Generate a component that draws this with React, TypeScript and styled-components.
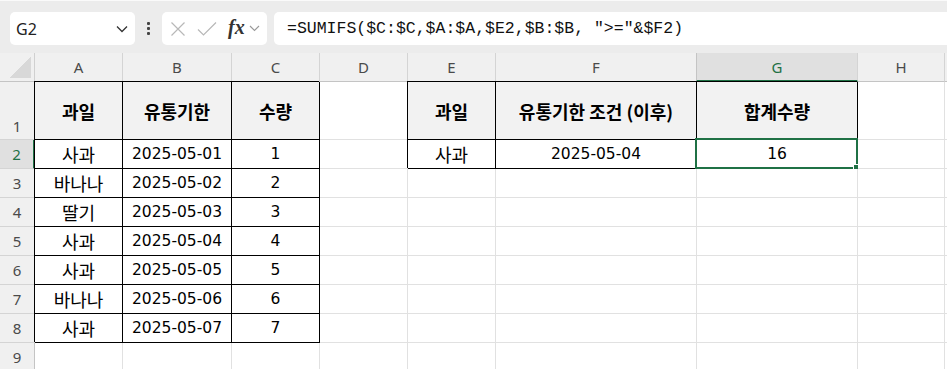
import styled, {createGlobalStyle} from "styled-components";

const GlobalStyle = createGlobalStyle`
  html, body {
    margin: 0;
    padding: 0;
    background: #fff;
    overflow: hidden;
  }
  body {
    font-family: "Noto Sans", "Noto Sans CJK KR", sans-serif;
  }
`

const green = '#1f7145'
const columns = ['A', 'B', 'C', 'D', 'E', 'F', 'G', 'H', '']
const widths = [35, 88, 109, 88, 88, 88, 201, 161, 87, 60]

const rows: string[][] = [
    ['과일', '유통기한', '수량', '', '과일', '유통기한 조건 (이후)', '합계수량', '', ''],
    ['사과', '2025-05-01', '1', '', '사과', '2025-05-04', '16', '', ''],
    ['바나나', '2025-05-02', '2', '', '', '', '', '', ''],
    ['딸기', '2025-05-03', '3', '', '', '', '', '', ''],
    ['사과', '2025-05-04', '4', '', '', '', '', '', ''],
    ['사과', '2025-05-05', '5', '', '', '', '', '', ''],
    ['바나나', '2025-05-06', '6', '', '', '', '', '', ''],
    ['사과', '2025-05-07', '7', '', '', '', '', '', ''],
    ['', '', '', '', '', '', '', '', ''],
]

// table ranges: A1:C8 and E1:G2
const isBoxed = (r: number, c: number) =>
    (c <= 2 && r <= 7) || (c >= 4 && c <= 6 && r <= 1)

const App = () => {
    return (
        <>
            <GlobalStyle/>
            <Page>
                <FormulaBar>
                    <NameBox>
                        <NameText>G2</NameText>
                        <Chevron width="12" height="8" viewBox="0 0 12 8">
                            <path d="M1 1.5 L6 6.5 L11 1.5" fill="none" stroke="#333" strokeWidth="1.3"/>
                        </Chevron>
                    </NameBox>
                    <Dots>
                        <span/><span/><span/>
                    </Dots>
                    <FxBox>
                        <svg width="16" height="16" viewBox="0 0 16 16">
                            <path d="M1.5 1.5 L14.5 14.5 M14.5 1.5 L1.5 14.5" stroke="#b8b8b8" strokeWidth="1.2"/>
                        </svg>
                        <svg width="20" height="16" viewBox="0 0 20 16">
                            <path d="M1 8.5 L6.5 14 L19 1.5" fill="none" stroke="#b8b8b8" strokeWidth="1.2"/>
                        </svg>
                        <FxLabel>fx</FxLabel>
                        <svg width="11" height="7" viewBox="0 0 11 7">
                            <path d="M1 1 L5.5 5.5 L10 1" fill="none" stroke="#999" strokeWidth="1.1"/>
                        </svg>
                    </FxBox>
                    <FormulaBox>=SUMIFS($C:$C,$A:$A,$E2,$B:$B, "&gt;="&amp;$F2)</FormulaBox>
                </FormulaBar>
                <Sheet $widths={widths}>
                    <Corner>
                        <Triangle/>
                    </Corner>
                    {columns.map((col, i) => (
                        <ColHeader key={i} $active={col === 'G'}>{col}</ColHeader>
                    ))}
                    {rows.map((row, r) => (
                        <Row key={r}>
                            <RowHeader $active={r === 1} $tall={r === 0}>{r + 1}</RowHeader>
                            {row.map((text, c) => (
                                <Cell
                                    key={c}
                                    $boxed={isBoxed(r, c)}
                                    $head={r === 0 && isBoxed(r, c)}
                                    $kr={/[가-힣]/.test(text)}
                                >
                                    {text}
                                    {r === 1 && c === 6 && (
                                        <Selection>
                                            <Handle/>
                                        </Selection>
                                    )}
                                </Cell>
                            ))}
                        </Row>
                    ))}
                </Sheet>
            </Page>
        </>
    );
};

const Page = styled.div`
  width: 947px;
  height: 369px;
  overflow: hidden;
  background: #fff;
`

const FormulaBar = styled.div`
  height: 53px;
  box-sizing: border-box;
  background: #ececec;
  border-top: 1px solid #fafafa;
  padding: 11px 0 8px 10px;
  display: flex;
  align-items: stretch;
`

const NameBox = styled.div`
  width: 125px;
  box-sizing: border-box;
  background: #fff;
  border-radius: 5px;
  display: flex;
  align-items: center;
  justify-content: space-between;
  padding: 0 7px 0 6px;
`

const NameText = styled.span`
  font-family: "Noto Sans", sans-serif;
  font-size: 16px;
  color: #222;
`

const Chevron = styled.svg`
  display: block;
`

const Dots = styled.div`
  width: 27px;
  display: flex;
  flex-direction: column;
  align-items: center;
  justify-content: center;
  gap: 2px;

  span {
    width: 3px;
    height: 3px;
    background: #444;
    border-radius: 1px;
  }
`

const FxBox = styled.div`
  width: 105px;
  box-sizing: border-box;
  background: #fff;
  border-radius: 5px;
  display: flex;
  align-items: center;
  gap: 11px;
  padding: 0 0 0 8px;

  svg {
    display: block;
  }
  svg:last-child {
    margin-left: -7px;
  }
`

const FxLabel = styled.span`
  font-family: "Liberation Serif", serif;
  font-style: italic;
  font-weight: 700;
  font-size: 20px;
  color: #333;
  line-height: 1;
  margin-top: -3px;
`

const FormulaBox = styled.div`
  flex: 1;
  margin-left: 7px;
  background: #fff;
  border-radius: 5px 0 0 5px;
  display: flex;
  align-items: center;
  padding-left: 13px;
  font-family: "Liberation Mono", "DejaVu Sans Mono", monospace;
  font-size: 16.5px;
  color: #111;
  white-space: pre;
`

const Sheet = styled.div<{ $widths: number[] }>`
  display: grid;
  grid-template-columns: ${({$widths}) => $widths.map(w => `${w}px`).join(' ')};
  grid-template-rows: 29px 58px repeat(9, 29px);
`

const Row = styled.div`
  display: contents;
`

const Corner = styled.div`
  background: #f0f0f0;
  border-right: 1px solid #d0d0d0;
  border-bottom: 1px solid #c4c4c4;
  box-sizing: border-box;
  display: flex;
  align-items: flex-end;
  justify-content: flex-end;
  padding: 0 3px 3px 0;
`

const Triangle = styled.div`
  width: 21px;
  height: 21px;
  background: linear-gradient(135deg, transparent 50%, #d8d8d8 50%);
`

const ColHeader = styled.div<{ $active: boolean }>`
  box-sizing: border-box;
  display: flex;
  align-items: center;
  justify-content: center;
  font-family: "Noto Sans", sans-serif;
  font-size: 15px;
  color: ${({$active}) => $active ? green : '#4a4a4a'};
  background: ${({$active}) => $active ? '#e0e0e0' : '#f0f0f0'};
  border-right: 1px solid #d4d4d4;
  border-bottom: ${({$active}) => $active ? `2px solid ${green}` : '1px solid #c4c4c4'};
  border-left: ${({$active}) => $active ? '1px solid #c4c4c4' : 'none'};
  margin-left: ${({$active}) => $active ? '-1px' : '0'};
`

const RowHeader = styled.div<{ $active: boolean; $tall: boolean }>`
  box-sizing: border-box;
  display: flex;
  align-items: ${({$tall}) => $tall ? 'flex-end' : 'center'};
  padding-bottom: ${({$tall}) => $tall ? '3px' : '0'};
  justify-content: center;
  font-family: "Noto Sans", sans-serif;
  font-size: 15px;
  color: ${({$active}) => $active ? green : '#4a4a4a'};
  background: ${({$active}) => $active ? '#e0e0e0' : '#f0f0f0'};
  border-bottom: 1px solid #d4d4d4;
  border-right: ${({$active}) => $active ? `2px solid ${green}` : '1px solid #c4c4c4'};
`

const Cell = styled.div<{ $boxed: boolean; $head: boolean; $kr: boolean }>`
  position: relative;
  box-sizing: border-box;
  display: flex;
  align-items: center;
  justify-content: center;
  white-space: nowrap;
  font-family: ${({$kr}) => $kr
          ? '"Noto Sans CJK KR", sans-serif'
          : '"DejaVu Sans", "Noto Sans CJK KR", sans-serif'};
  font-size: ${({$kr}) => $kr ? '18px' : '15.5px'};
  font-weight: ${({$head}) => $head ? 700 : 400};
  color: #000;
  background: ${({$head}) => $head ? '#f2f2f2' : '#fff'};
  border-right: 1px solid ${({$boxed}) => $boxed ? '#000' : '#e1e1e1'};
  border-bottom: 1px solid ${({$boxed}) => $boxed ? '#000' : '#e1e1e1'};
  box-shadow: ${({$boxed}) => $boxed ? '-1px -1px 0 #000' : 'none'};
`

const Selection = styled.span`
  position: absolute;
  top: -2px;
  left: -2px;
  right: -1px;
  bottom: -1px;
  border: 2px solid ${green};
  pointer-events: none;
`

const Handle = styled.span`
  position: absolute;
  right: -5px;
  bottom: -5px;
  width: 6px;
  height: 6px;
  background: ${green};
  border: 1px solid #fff;
`

export default App;
